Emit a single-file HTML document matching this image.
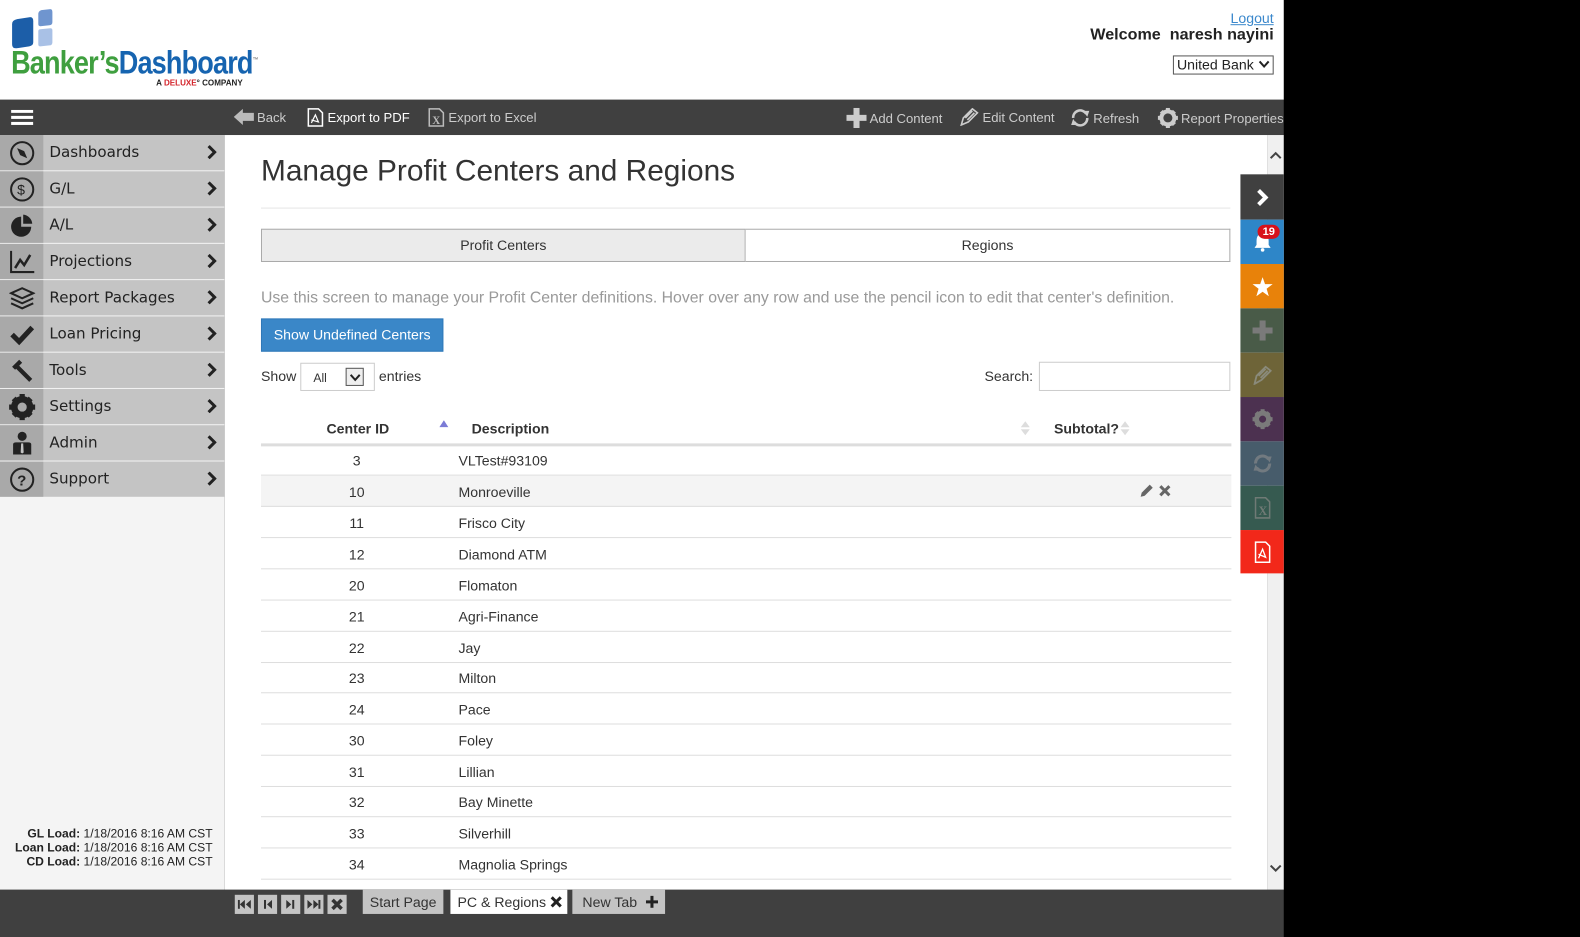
<!DOCTYPE html>
<html><head><meta charset="utf-8">
<style>
*{box-sizing:border-box;margin:0;padding:0}
body{width:1580px;height:930px;background:#000;font-family:"Liberation Sans",Arial,sans-serif;position:relative;overflow:hidden;color:#333}
#wrap{position:absolute;left:0;top:0;width:1568px;height:923px;transform:scale(1.00766);transform-origin:0 0}
.a{position:absolute}
#hdr{left:0;top:0;width:1274px;height:99px;background:#fff}
#tb{left:0;top:99px;width:1274px;height:35px;background:#404040;color:#ccc;font-size:13px}
#tb .it{position:absolute;top:8px;display:flex;align-items:center;gap:3px;white-space:nowrap}
#side{left:0;top:134px;width:223px;height:749px;background:#f4f4f4}
.mi{position:absolute;left:0;width:223px;height:35px;background:#c4c4c4}
.mi .ic{position:absolute;left:0;top:0;width:43px;height:35px;background:#a9a9a9;display:flex;align-items:center;justify-content:center}
.mi .lb{position:absolute;left:49px;top:8px;font-family:"DejaVu Sans",sans-serif;font-size:15px;color:#222}
.mi .ch{position:absolute;left:205px;top:10px}
#main{left:223px;top:134px;width:1035px;height:749px;background:#fff}
#sb{left:1258px;top:134px;width:16px;height:749px;background:#f0f0f0}
.rb{position:absolute;left:1231px;width:43px;height:44px;display:flex;align-items:center;justify-content:center}
.row{position:absolute;left:259px;width:963px;height:31px;border-bottom:1px solid #ddd;font-size:14px;color:#333}
.row .id{position:absolute;left:0;width:190px;text-align:center;top:8px}
.row .ds{position:absolute;left:196px;top:8px}
#bot{left:0;top:883px;width:1274px;height:47px;background:#404040}
.nb{position:absolute;top:5px;width:19px;height:19px;background:#c4c4c4;display:flex;align-items:center;justify-content:center}
.tab{position:absolute;top:0;height:24px;background:#c4c4c4;font-size:14px;color:#333;padding:4px 0 0 7px;white-space:nowrap}
</style></head><body><div id="wrap">
<div id="hdr" class="a">
  <svg class="a" style="left:10px;top:8px" width="45" height="40" viewBox="0 0 45 40">
    <path d="M2 16 Q2 12 7 11 L20 9 Q23 9 23 13 L23 34 Q23 37 19 38 L6 40 Q2 40 2 36Z" fill="#1c5ea8"/>
    <path d="M28 6 Q28 3 31 2 L40 1 Q42 1 42 4 L42 14 Q42 17 39 17 L30 18 Q28 18 28 16Z" fill="#6f95cf"/>
    <path d="M28 23 Q28 21 30 21 L40 20 Q42 20 42 22 L42 34 Q42 37 39 37 L30 38 Q28 38 28 36Z" fill="#a9c1e6"/>
  </svg>
  <div class="a" style="left:11px;top:44px;font-family:'Liberation Sans Narrow','Liberation Sans',sans-serif;font-weight:bold;font-size:32px;letter-spacing:-1px;transform:scaleX(0.84);transform-origin:left;white-space:nowrap"><span style="color:#3f9f3f">Banker’s</span><span style="color:#1664b0">Dashboard</span><sup style="font-size:7px;color:#888">™</sup></div>
  <div class="a" style="left:155px;top:78px;font-size:8px;font-weight:bold;color:#222;white-space:nowrap">A <span style="color:#d3232a">DELUXE</span>° COMPANY</div>
  <div class="a" style="right:10px;top:10px;font-size:14px;color:#3b88cc;text-decoration:underline">Logout</div>
  <div class="a" style="right:10px;top:26px;font-size:16px;font-weight:bold;color:#222;white-space:pre">Welcome  naresh nayini</div>
  <div class="a" style="left:1164px;top:55px;width:100px;height:19px;border:1px solid #555;font-size:14px;color:#222;padding-left:3px;line-height:16px">United Bank<svg class="a" style="right:3px;top:4px" width="11" height="8"><path d="M1 1 L5.5 6 L10 1" stroke="#222" stroke-width="2" fill="none"/></svg></div>
</div>
<div id="tb" class="a">
  <svg class="a" style="left:11px;top:10px" width="22" height="16"><rect y="0" width="22" height="3" fill="#fff"/><rect y="6" width="22" height="3" fill="#fff"/><rect y="12" width="22" height="3" fill="#fff"/></svg>
  <div class="it" style="left:232px"><svg width="20" height="18"><path d="M0 9 L9 1 V5 H20 V13 H9 V17Z" fill="#bbb"/></svg>Back</div>
  <div class="it" style="left:304px;color:#fff"><svg width="18" height="19"><path d="M2 1 H12 L16 5 V18 H2Z" fill="none" stroke="#fff" stroke-width="1.5"/><path d="M5 15 L9 7 L12 14 L5 12" fill="none" stroke="#fff" stroke-width="1.2"/></svg>Export to PDF</div>
  <div class="it" style="left:424px"><svg width="18" height="19"><path d="M2 1 H12 L16 5 V18 H2Z" fill="none" stroke="#bbb" stroke-width="1.5"/><text x="5" y="16" font-size="11" font-weight="bold" fill="#bbb" font-family="Liberation Serif">X</text></svg>Export to Excel</div>
  <div class="it" style="left:840px"><svg width="20" height="20"><path d="M7 0 H13 V7 H20 V13 H13 V20 H7 V13 H0 V7 H7Z" fill="#ccc"/></svg>Add Content</div>
  <div class="it" style="left:952px"><svg width="20" height="18"><path d="M2 17 L4 10 L13 1 L18 5 L9 14Z M6 10 L13 3 M8 12 L15 5" fill="none" stroke="#ccc" stroke-width="1.6"/></svg>Edit Content</div>
  <div class="it" style="left:1062px"><svg width="20" height="20"><path d="M3 10 A7 7 0 0 1 16 6 M17 10 A7 7 0 0 1 4 14" fill="none" stroke="#ccc" stroke-width="2.5"/><path d="M13 3 L19 3 L17 9Z M7 17 L1 17 L3 11Z" fill="#ccc"/></svg>Refresh</div>
  <div class="it" style="left:1149px"><svg width="20" height="20" viewBox="0 0 20 20"><circle cx="10" cy="10" r="6.5" fill="none" stroke="#ccc" stroke-width="4"/><path d="M8 0h4v4h-4zM8 16h4v4h-4zM0 8h4v4h-4zM16 8h4v4h-4z" fill="#ccc"/><path d="M2 4.8 5 2 7.5 4.5 4.5 7.5zM15 2 18 4.8 15.5 7.5 12.5 4.5zM18 15.2 15 18 12.5 15.5 15.5 12.5zM5 18 2 15.2 4.5 12.5 7.5 15.5z" fill="#ccc"/></svg>Report Properties</div>
</div>
<div id="side" class="a">
  <div class="mi" style="top:0"><div class="ic"><svg width="26" height="26"><circle cx="13" cy="13" r="11" fill="none" stroke="#222" stroke-width="2"/><path d="M8 8 L15 11 L18 18 L11 15Z" fill="#222"/></svg></div><div class="lb">Dashboards</div><svg class="ch" width="10" height="14"><path d="M2 1 L8 7 L2 13" stroke="#222" stroke-width="3" fill="none"/></svg></div>
  <div class="mi" style="top:36px"><div class="ic"><svg width="26" height="26"><circle cx="13" cy="13" r="11" fill="none" stroke="#222" stroke-width="2"/><text x="8" y="18" font-size="14" fill="#222" font-family="Liberation Sans">$</text></svg></div><div class="lb">G/L</div><svg class="ch" width="10" height="14"><path d="M2 1 L8 7 L2 13" stroke="#222" stroke-width="3" fill="none"/></svg></div>
  <div class="mi" style="top:72px"><div class="ic"><svg width="26" height="26"><path d="M12 4 A10 10 0 1 0 22 14 H12Z" fill="#222"/><path d="M14 2 A10 10 0 0 1 23 11 H14Z" fill="#222"/></svg></div><div class="lb">A/L</div><svg class="ch" width="10" height="14"><path d="M2 1 L8 7 L2 13" stroke="#222" stroke-width="3" fill="none"/></svg></div>
  <div class="mi" style="top:108px"><div class="ic"><svg width="26" height="26"><path d="M2 2 V23 H25" stroke="#222" stroke-width="2" fill="none"/><path d="M6 19 L11 11 L15 16 L21 6" stroke="#222" stroke-width="2.5" fill="none"/></svg></div><div class="lb">Projections</div><svg class="ch" width="10" height="14"><path d="M2 1 L8 7 L2 13" stroke="#222" stroke-width="3" fill="none"/></svg></div>
  <div class="mi" style="top:144px"><div class="ic"><svg width="26" height="26"><path d="M2 8 L13 3 L24 8 L13 13Z M2 13 L13 18 L24 13 M2 18 L13 23 L24 18" stroke="#222" stroke-width="2" fill="none"/></svg></div><div class="lb">Report Packages</div><svg class="ch" width="10" height="14"><path d="M2 1 L8 7 L2 13" stroke="#222" stroke-width="3" fill="none"/></svg></div>
  <div class="mi" style="top:180px"><div class="ic"><svg width="26" height="26"><path d="M3 13 L10 20 L23 6" stroke="#222" stroke-width="5" fill="none"/></svg></div><div class="lb">Loan Pricing</div><svg class="ch" width="10" height="14"><path d="M2 1 L8 7 L2 13" stroke="#222" stroke-width="3" fill="none"/></svg></div>
  <div class="mi" style="top:216px"><div class="ic"><svg width="26" height="26"><path d="M3 9 L10 2 L13 5 L10 8 L23 21 L20 24 L7 11 L6 12Z" fill="#222"/></svg></div><div class="lb">Tools</div><svg class="ch" width="10" height="14"><path d="M2 1 L8 7 L2 13" stroke="#222" stroke-width="3" fill="none"/></svg></div>
  <div class="mi" style="top:252px"><div class="ic"><svg width="26" height="26" viewBox="0 0 20 20"><circle cx="10" cy="10" r="6" fill="none" stroke="#222" stroke-width="5"/><path d="M8 0h4v4h-4zM8 16h4v4h-4zM0 8h4v4h-4zM16 8h4v4h-4z" fill="#222"/><path d="M2 4.8 5 2 7.5 4.5 4.5 7.5zM15 2 18 4.8 15.5 7.5 12.5 4.5zM18 15.2 15 18 12.5 15.5 15.5 12.5zM5 18 2 15.2 4.5 12.5 7.5 15.5z" fill="#222"/></svg></div><div class="lb">Settings</div><svg class="ch" width="10" height="14"><path d="M2 1 L8 7 L2 13" stroke="#222" stroke-width="3" fill="none"/></svg></div>
  <div class="mi" style="top:288px"><div class="ic"><svg width="26" height="26"><circle cx="13" cy="6" r="4.5" fill="#222"/><path d="M4 24 V14 Q4 12 7 12 H19 Q22 12 22 14 V24Z" fill="#222"/><path d="M12 13 H14 L14.5 22 L13 23 L11.5 22Z" fill="#c4c4c4"/></svg></div><div class="lb">Admin</div><svg class="ch" width="10" height="14"><path d="M2 1 L8 7 L2 13" stroke="#222" stroke-width="3" fill="none"/></svg></div>
  <div class="mi" style="top:324px"><div class="ic"><svg width="26" height="26"><circle cx="13" cy="13" r="11" fill="none" stroke="#222" stroke-width="2"/><text x="8" y="19" font-size="15" font-weight="bold" fill="#222" font-family="Liberation Sans">?</text></svg></div><div class="lb">Support</div><svg class="ch" width="10" height="14"><path d="M2 1 L8 7 L2 13" stroke="#222" stroke-width="3" fill="none"/></svg></div>
  <div class="a" style="right:12px;top:686px;font-size:12px;color:#222;text-align:right;line-height:14px;white-space:nowrap"><b>GL Load:</b> 1/18/2016 8:16 AM CST<br><b>Loan Load:</b> 1/18/2016 8:16 AM CST<br><b>CD Load:</b> 1/18/2016 8:16 AM CST</div>
</div>
<div id="main" class="a"></div>
<div id="sb" class="a"><svg class="a" style="left:2px;top:16px" width="12" height="8"><path d="M1 7 L6 2 L11 7" stroke="#444" stroke-width="2" fill="none"/></svg><svg class="a" style="left:2px;top:724px" width="12" height="8"><path d="M1 1 L6 6 L11 1" stroke="#444" stroke-width="2" fill="none"/></svg></div>

<div class="a" style="left:259px;top:153px;font-size:29.6px;color:#333;white-space:nowrap">Manage Profit Centers and Regions</div>
<div class="a" style="left:259px;top:206px;width:962px;height:1px;background:#e5e5e5"></div>
<div class="a" style="left:259px;top:227px;width:481px;height:33px;background:#ebebeb;border:1px solid #aaa;font-size:14px;text-align:center;line-height:31px">Profit Centers</div>
<div class="a" style="left:740px;top:227px;width:481px;height:33px;background:#fff;border:1px solid #aaa;border-left:none;font-size:14px;text-align:center;line-height:31px">Regions</div>
<div class="a" style="left:259px;top:287px;font-size:15.7px;color:#999;white-space:nowrap">Use this screen to manage your Profit Center definitions. Hover over any row and use the pencil icon to edit that center's definition.</div>
<div class="a" style="left:259px;top:316px;width:181px;height:33px;background:#3a87c8;border:1px solid #2f78b8;color:#fff;font-size:14px;text-align:center;line-height:31px">Show Undefined Centers</div>
<div class="a" style="left:259px;top:365px;font-size:14px">Show</div>
<div class="a" style="left:298px;top:360px;width:74px;height:28px;border:1px solid #ccc;font-size:12px;padding:7px 0 0 12px">All<div class="a" style="left:44px;top:4px;width:18px;height:18px;border:1px solid #555;background:#eee"><svg class="a" style="left:3px;top:5px" width="11" height="8"><path d="M1 1 L5.5 6 L10 1" stroke="#222" stroke-width="2" fill="none"/></svg></div></div>
<div class="a" style="left:376px;top:365px;font-size:14px">entries</div>
<div class="a" style="left:977px;top:365px;font-size:14px">Search:</div>
<div class="a" style="left:1031px;top:359px;width:190px;height:29px;border:1px solid #ccc"></div>

<div class="a" style="left:259px;top:417px;width:963px;height:26px;border-bottom:3px solid #ddd;font-size:14px;font-weight:bold;color:#333">
  <span class="a" style="left:65px">Center ID</span>
  <svg class="a" style="left:177px;top:0" width="9" height="7"><path d="M0 7 L4.5 0 L9 7Z" fill="#7b7bd6"/></svg>
  <span class="a" style="left:209px">Description</span>
  <svg class="a" style="left:754px;top:0" width="9" height="16"><path d="M0 7 L4.5 1 L9 7Z M0 9 L4.5 15 L9 9Z" fill="#ddd"/></svg>
  <span class="a" style="left:787px">Subtotal?</span>
  <svg class="a" style="left:853px;top:0" width="9" height="16"><path d="M0 7 L4.5 1 L9 7Z M0 9 L4.5 15 L9 9Z" fill="#ddd"/></svg>
</div>

<div class="row" style="top:441px"><span class="id">3</span><span class="ds">VLTest#93109</span></div>
<div class="row" style="top:472px;background:#f4f4f4"><span class="id">10</span><span class="ds">Monroeville</span>
  <svg class="a" style="left:872px;top:8px" width="14" height="14"><path d="M1 13 L2 9 L10 1 L13 4 L5 12Z" fill="#666"/></svg>
  <svg class="a" style="left:891px;top:9px" width="12" height="12"><path d="M1.5 1.5 L10.5 10.5 M10.5 1.5 L1.5 10.5" stroke="#666" stroke-width="3"/></svg></div>
<div class="row" style="top:503px"><span class="id">11</span><span class="ds">Frisco City</span></div>
<div class="row" style="top:534px"><span class="id">12</span><span class="ds">Diamond ATM</span></div>
<div class="row" style="top:565px"><span class="id">20</span><span class="ds">Flomaton</span></div>
<div class="row" style="top:596px"><span class="id">21</span><span class="ds">Agri-Finance</span></div>
<div class="row" style="top:627px"><span class="id">22</span><span class="ds">Jay</span></div>
<div class="row" style="top:657px"><span class="id">23</span><span class="ds">Milton</span></div>
<div class="row" style="top:688px"><span class="id">24</span><span class="ds">Pace</span></div>
<div class="row" style="top:719px"><span class="id">30</span><span class="ds">Foley</span></div>
<div class="row" style="top:750px"><span class="id">31</span><span class="ds">Lillian</span></div>
<div class="row" style="top:780px"><span class="id">32</span><span class="ds">Bay Minette</span></div>
<div class="row" style="top:811px"><span class="id">33</span><span class="ds">Silverhill</span></div>
<div class="row" style="top:842px"><span class="id">34</span><span class="ds">Magnolia Springs</span></div>

<div class="rb" style="top:173px;height:45px;background:#404040"><svg width="14" height="18"><path d="M3 2 L10 9 L3 16" stroke="#fff" stroke-width="4" fill="none"/></svg></div>
<div class="rb" style="top:218px;background:#2e86c8"><svg width="20" height="20"><path d="M10 2 Q4 2 4 9 V13 L2 16 H18 L16 13 V9 Q16 2 10 2Z" fill="#fff"/><circle cx="10" cy="18" r="1.8" fill="#fff"/></svg><div class="a" style="left:17px;top:5px;background:#d8111b;color:#fff;font-size:11px;font-weight:bold;border-radius:8px;padding:1px 5px">19</div></div>
<div class="rb" style="top:262px;background:#e8820a"><svg width="20" height="19"><path d="M10 0 L12.4 7 H20 L14 11.5 L16.2 19 L10 14.5 L3.8 19 L6 11.5 L0 7 H7.6Z" fill="#fff"/></svg></div>
<div class="rb" style="top:306px;background:#495b48"><svg width="20" height="20"><path d="M7 0 H13 V7 H20 V13 H13 V20 H7 V13 H0 V7 H7Z" fill="#7a7a7a"/></svg></div>
<div class="rb" style="top:350px;background:#6e6438"><svg width="20" height="20"><path d="M2 19 L4 11 L13 2 L18 6 L9 15Z M6 11 L13 4 M8 13 L15 6" fill="none" stroke="#8a8a7a" stroke-width="1.8"/></svg></div>
<div class="rb" style="top:394px;background:#4c3150"><svg width="20" height="20" viewBox="0 0 20 20"><circle cx="10" cy="10" r="6" fill="none" stroke="#7a7a7a" stroke-width="5"/><path d="M8 0h4v4h-4zM8 16h4v4h-4zM0 8h4v4h-4zM16 8h4v4h-4z" fill="#7a7a7a"/><path d="M2 4.8 5 2 7.5 4.5 4.5 7.5zM15 2 18 4.8 15.5 7.5 12.5 4.5zM18 15.2 15 18 12.5 15.5 15.5 12.5zM5 18 2 15.2 4.5 12.5 7.5 15.5z" fill="#7a7a7a"/></svg></div>
<div class="rb" style="top:438px;background:#475c6b"><svg width="20" height="20"><path d="M3 10 A7 7 0 0 1 16 6 M17 10 A7 7 0 0 1 4 14" fill="none" stroke="#727a80" stroke-width="3"/><path d="M13 3 L19 3 L17 9Z M7 17 L1 17 L3 11Z" fill="#727a80"/></svg></div>
<div class="rb" style="top:482px;background:#365a50"><svg width="18" height="22"><path d="M2 1 H12 L16 5 V21 H2Z" fill="none" stroke="#6f7a75" stroke-width="1.5"/><text x="5" y="18" font-size="12" font-weight="bold" fill="#6f7a75" font-family="Liberation Serif">X</text></svg></div>
<div class="rb" style="top:526px;height:43px;background:#f2281a"><svg width="18" height="22"><path d="M2 1 H12 L16 5 V21 H2Z" fill="none" stroke="#fff" stroke-width="1.5"/><path d="M5 17 L9 8 L12 16 L5 13" fill="none" stroke="#fff" stroke-width="1.3"/></svg></div>

<div id="bot" class="a">
  <div class="nb" style="left:233px"><svg width="13" height="9"><path d="M0 0h2v9h-2zM7 0v9l-5-4.5zM13 0v9l-5-4.5z" fill="#333"/></svg></div>
  <div class="nb" style="left:256px"><svg width="9" height="9"><path d="M1 0h2v9h-2zM9 0v9l-5-4.5z" fill="#333"/></svg></div>
  <div class="nb" style="left:279px"><svg width="9" height="9"><path d="M6 0h2v9h-2zM0 0v9l5-4.5z" fill="#333"/></svg></div>
  <div class="nb" style="left:302px"><svg width="13" height="9"><path d="M11 0h2v9h-2zM0 0v9l5-4.5zM6 0v9l5-4.5z" fill="#333"/></svg></div>
  <div class="nb" style="left:325px"><svg width="13" height="13"><path d="M2 2 L11 11 M11 2 L2 11" stroke="#333" stroke-width="3.5"/></svg></div>
  <div class="tab" style="left:360px;width:80px">Start Page</div>
  <div class="tab" style="left:447px;width:116px;background:#fff">PC &amp; Regions <svg width="12" height="12" style="vertical-align:-1px"><path d="M1.5 1.5 L10.5 10.5 M10.5 1.5 L1.5 10.5" stroke="#222" stroke-width="3"/></svg></div>
  <div class="tab" style="left:568px;width:92px;padding-left:10px">New Tab <svg width="12" height="12" style="vertical-align:-1px;margin-left:5px"><path d="M4.5 0h3v4.5h4.5v3h-4.5v4.5h-3v-4.5h-4.5v-3h4.5z" fill="#222"/></svg></div>
</div>
</div></body></html>
